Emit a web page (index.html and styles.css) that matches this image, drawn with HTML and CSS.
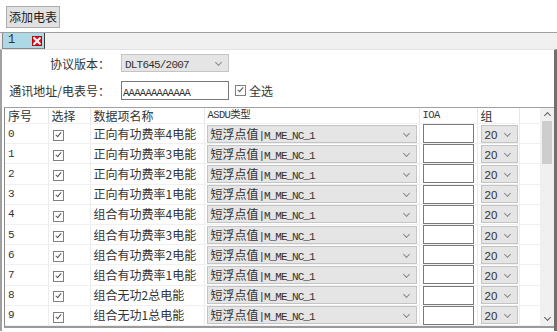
FILE: index.html
```html
<!DOCTYPE html>
<html lang="zh">
<head>
<meta charset="UTF-8">
<title>添加电表</title>
<link rel="stylesheet" href="styles.css">
</head>
<body>
<div class="toolbar">
  <button class="btn">添加电表</button>
</div>

<div class="panel">
  <div class="tabs">
    <div class="tab">1<span class="tab-close"></span></div>
  </div>
  <div class="page">
    <div class="form">
      <label class="lbl">协议版本：</label>
      <div class="combo combo-proto"><span class="mono">DLT645/2007</span><i class="arrow"></i></div>
      <span></span>
      <label class="lbl">通讯地址/电表号：</label>
      <div class="textbox"><span class="addr">AAAAAAAAAAAA</span></div>
      <label class="check-all"><i class="chk"></i>全选</label>
    </div>

    <div class="grid-wrap">
      <table class="grid">
        <colgroup>
          <col style="width:43px"><col style="width:42px"><col style="width:114px">
          <col style="width:215px"><col style="width:58px"><col style="width:42px"><col>
        </colgroup>
        <thead>
          <tr><th>序号</th><th>选择</th><th>数据项名称</th><th class="mono">ASDU类型</th><th class="mono">IOA</th><th>组</th><th></th></tr>
        </thead>
        <tbody id="rows"></tbody>
      </table>
      <div class="vscroll">
        <div class="sb-arrow up"></div>
        <div class="sb-thumb"></div>
        <div class="sb-arrow down"></div>
      </div>
    </div>
  </div>
</div>

<script>
var names = ["正向有功费率4电能","正向有功费率3电能","正向有功费率2电能","正向有功费率1电能",
  "组合有功费率4电能","组合有功费率3电能","组合有功费率2电能","组合有功费率1电能",
  "组合无功2总电能","组合无功1总电能"];
var html = "";
for (var i = 0; i < names.length; i++) {
  html += '<tr>' +
    '<td class="num">' + i + '</td>' +
    '<td><i class="chk"></i></td>' +
    '<td>' + names[i] + '</td>' +
    '<td><div class="combo combo-asdu">短浮点值<span class="mono">|M_ME_NC_1</span><i class="arrow"></i></div></td>' +
    '<td><div class="ioa"></div></td>' +
    '<td><div class="combo combo-grp"><span class="grp">20</span><i class="arrow"></i></div></td>' +
    '<td></td></tr>';
}
document.getElementById("rows").innerHTML = html;
</script>
</body>
</html>
```

FILE: styles.css
```css
body {
  margin: 0;
  background: #fff;
  font-family: "Noto Sans CJK SC", "Microsoft YaHei", sans-serif;
  font-size: 12px;
  color: #333;
  width: 557px;
  height: 332px;
  overflow: hidden;
}
.mono {
  font-family: "Liberation Mono", "Noto Sans CJK SC", monospace;
  font-size: 11px;
  letter-spacing: -0.8px;
}
.toolbar {
  padding: 6px 0 0 6px;
  height: 26px;
  box-sizing: border-box;
}
.btn {
  height: 22px;
  width: 54px;
  padding: 0;
  border: 1px solid #adadad;
  background: #e1e1e1;
  font-family: inherit;
  font-size: 12px;
  color: #1a1a1a;
  line-height: 18px;
}
.panel {
  margin-top: 6px;
  border-top: 1px solid #a0a0a0;
}
.tabs {
  height: 16px;
  background: #f0f0f0;
  padding-left: 2px;
}
.tab {
  width: 43px;
  height: 16px;
  box-sizing: border-box;
  background: #add8e6;
  border: 1px solid #8a8a8a;
  border-right-color: #3c3c3c;
  border-top: none;
  position: relative;
  font-family: "Liberation Mono", monospace;
  font-size: 12px;
  line-height: 14px;
  padding-left: 5px;
}
.tab-close {
  position: absolute;
  right: 2px;
  top: 3px;
  width: 8px;
  height: 8px;
  background: #e81123;
  border: 1px solid #b00;
}
.tab-close::before, .tab-close::after {
  content: "";
  position: absolute;
  left: 3px;
  top: -1px;
  width: 1.5px;
  height: 10px;
  background: #fff;
  transform: rotate(45deg);
}
.tab-close::after { transform: rotate(-45deg); }
.page {
  height: 282px;
  border-top: 1px solid #e3e3e3;
  border-left: 2px solid #a0a0a0;
  border-right: 3px solid #707070;
  box-sizing: border-box;
  padding: 4px 0 0 1px;
}
.form {
  display: grid;
  grid-template-columns: 107px 108px auto;
  grid-template-rows: 18px 19px;
  column-gap: 11px;
  row-gap: 9px;
  align-items: center;
  margin-bottom: 7px;
}
.lbl {
  text-align: right;
}
.combo {
  position: relative;
  box-sizing: border-box;
  background: #e5e5e5;
  border: 1px solid #c4c4c4;
  height: 18px;
  line-height: 16px;
  padding-left: 3px;
  white-space: nowrap;
  overflow: hidden;
}
.arrow {
  position: absolute;
  right: 7px;
  top: 5px;
  width: 4px;
  height: 4px;
  border-right: 1px solid #8a8a8a;
  border-bottom: 1px solid #8a8a8a;
  transform: rotate(45deg);
}
.textbox {
  height: 19px;
  box-sizing: border-box;
  border: 1px solid #7a7a7a;
  line-height: 17px;
  padding-left: 1px;
}
.addr {
  font-family: "Liberation Mono", monospace;
  font-size: 10.5px;
  letter-spacing: -0.7px;
}
.check-all {
  display: flex;
  align-items: center;
  gap: 3px;
  margin-left: -5px;
}
.chk {
  display: inline-block;
  width: 9px;
  height: 9px;
  border: 1px solid #808080;
  position: relative;
  vertical-align: middle;
}
.chk::after {
  content: "";
  position: absolute;
  left: 3px;
  top: 0px;
  width: 2px;
  height: 5px;
  border-right: 1px solid #555;
  border-bottom: 1px solid #555;
  transform: rotate(40deg);
}
.grid-wrap {
  position: relative;
  margin-left: 1px;
  height: 218px;
  border-top: 1px solid #a0a0a0;
  border-left: 1px solid #8a8a8a;
  border-bottom: 2px solid #9a9a9a;
  overflow: hidden;
}
.grid {
  border-collapse: collapse;
  table-layout: fixed;
  width: 536px;
}
.grid th {
  height: 15px;
  font-weight: normal;
  text-align: left;
  padding: 0 0 0 3px;
  border-right: 1px solid #e6e6e6;
  border-bottom: 1px solid #f0f0f0;
  line-height: 15px;
}
.grid th.mono { font-size: 10.5px; letter-spacing: -0.6px; }
.grid td {
  height: 19.2px;
  padding: 0 0 0 3px;
  border-right: 1px solid #ececec;
  border-bottom: 1px solid #f0f0f0;
  white-space: nowrap;
  line-height: 18px;
}
.grid td.num {
  font-family: "Liberation Mono", monospace;
  font-size: 11px;
}
.grid td .chk { margin-left: 1px; }
.combo-asdu { width: 210px; margin-left: -1px; }
.combo-asdu .mono { letter-spacing: -1px; }
.ioa {
  width: 51px;
  height: 19px;
  box-sizing: border-box;
  border: 1px solid #7a7a7a;
  background: #fff;
}
.combo-grp { width: 37px; }
.grp { font-family: "Liberation Sans", sans-serif; font-size: 11.5px; }
.vscroll {
  position: absolute;
  right: 0;
  top: 0;
  bottom: 0;
  width: 14px;
  background: #f0f0f0;
}
.sb-thumb {
  position: absolute;
  left: 2px;
  right: 2px;
  top: 13px;
  height: 43px;
  background: #cdcdcd;
}
.sb-arrow {
  position: absolute;
  left: 5px;
  width: 4px;
  height: 4px;
  border-left: 1.5px solid #606060;
  border-top: 1.5px solid #606060;
}
.sb-arrow.up { top: 5px; transform: rotate(45deg); }
.sb-arrow.down { bottom: 6px; transform: rotate(225deg); }
```
